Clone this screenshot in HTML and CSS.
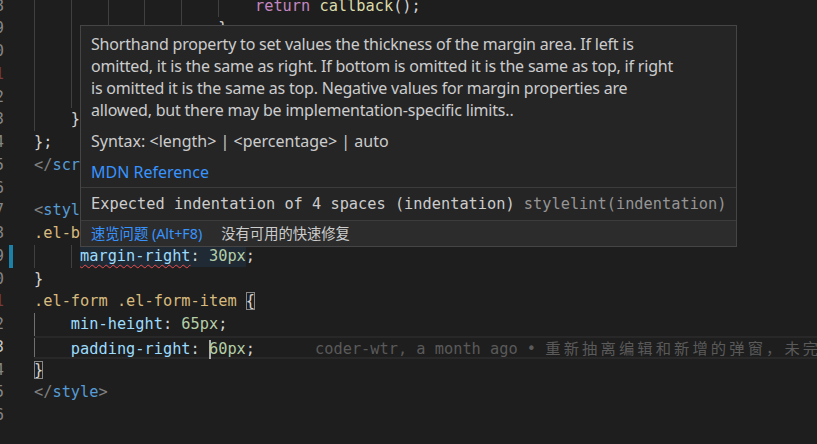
FILE: index.html
```html
<!DOCTYPE html>
<html>
  <head>
    <meta charset="UTF-8">
    <title>editor hover</title>
    <link rel="stylesheet" href="styles.css">
  </head>
  <body>
    <div class="editor">
      <div class="gutter">
        <div class="ln">98</div>
        <div class="ln">99</div>
        <div class="ln">100</div>
        <div class="ln red">101</div>
        <div class="ln">102</div>
        <div class="ln">103</div>
        <div class="ln">104</div>
        <div class="ln">105</div>
        <div class="ln">106</div>
        <div class="ln">107</div>
        <div class="ln">108</div>
        <div class="ln mod">109</div>
        <div class="ln">110</div>
        <div class="ln red">111</div>
        <div class="ln">112</div>
        <div class="ln active">113</div>
        <div class="ln">114</div>
        <div class="ln">115</div>
        <div class="ln">116</div>
      </div>

      <div class="code">
        <div class="l"><span class="g"></span><span class="g"></span><span class="g"></span><span class="g"></span><span class="g"></span><span class="g"></span><span class="kw">return</span> <span class="fn">callback</span>();</div>
        <div class="l"><span class="g"></span><span class="g"></span><span class="g"></span><span class="g"></span><span class="g"></span>}</div>
        <div class="l"><span class="g"></span><span class="g"></span><span class="g"></span><span class="g"></span>}</div>
        <div class="l"><span class="g"></span><span class="g"></span><span class="g"></span>});</div>
        <div class="l"><span class="g"></span><span class="g"></span>}</div>
        <div class="l"><span class="g"></span>}</div>
        <div class="l">};</div>
        <div class="l"><span class="tg">&lt;/</span><span class="tag">script</span><span class="tg">&gt;</span></div>
        <div class="l"></div>
        <div class="l"><span class="tg">&lt;</span><span class="tag">style</span> <span class="at">scoped</span><span class="tg">&gt;</span></div>
        <div class="l"><span class="sel">.el-button</span> {</div>
        <div class="l"><span class="g"></span><span class="g w1"></span><span class="hl"><span class="prop err">margin-right</span>: <span class="num">30px</span></span>;</div>
        <div class="l">}</div>
        <div class="l"><span class="sel">.el-form .el-form-item</span> <span class="match">{</span></div>
        <div class="l"><span class="g on"></span><span class="prop">min-height</span>: <span class="num">65px</span>;</div>
        <div class="l cur"><span class="g on"></span><span class="prop">padding-right</span>: <span class="caret"></span><span class="num">60px</span>;<span class="blame">coder-wtr, a month ago • <span class="cjk">重新抽离编辑和新增的弹窗，未完成</span></span></div>
        <div class="l"><span class="match">}</span></div>
        <div class="l"><span class="tg">&lt;/</span><span class="tag">style</span><span class="tg">&gt;</span></div>
        <div class="l"></div>
      </div>
    </div>

    <div class="hover">
      <div class="doc">
        <p class="desc">Shorthand property to set values the thickness of the margin area. If left is<br>omitted, it is the same as right. If bottom is omitted it is the same as top, if right<br>is omitted it is the same as top. Negative values for margin properties are<br>allowed, but there may be implementation-specific limits..</p>
        <p class="syntax">Syntax: &lt;length&gt; | &lt;percentage&gt; | auto</p>
        <p class="mdn">MDN Reference</p>
      </div>
      <div class="msg">Expected indentation of 4 spaces (indentation) <span class="src">stylelint(indentation)</span></div>
      <div class="status">
        <span class="peek">速览问题 (Alt+F8)</span>
        <span>没有可用的快速修复</span>
      </div>
    </div>
  </body>
</html>
```

FILE: styles.css
```css
*
{
  box-sizing: border-box;
}

body
{
  margin: 0;
  width: 817px;
  height: 444px;
  overflow: hidden;
  background: #1e1e1e;
}

.editor
{
  display: flex;
  margin-top: -5.4px;
  font-family: "DejaVu Sans Mono", monospace;
  font-size: 15.3px;
  color: #d4d4d4;
}

/* line numbers: only the last digit peeks in at the left edge */
.gutter
{
  flex: none;
  width: 64px;
  margin-left: -30px;
}

.ln
{
  position: relative;
  width: 34px;
  height: 22.75px;
  line-height: 22.75px;
  text-align: right;
  color: #858585;
}

.ln.red
{
  color: #7a3b3b;
}

.ln.active
{
  color: #c6c6c6;
}

.ln.mod::after
{
  content: "";
  position: absolute;
  left: 39px;
  top: 0;
  width: 4px;
  height: 100%;
  background: #1b81a8;
}

.code
{
  flex: 1;
  min-width: 0;
}

.l
{
  height: 22.75px;
  line-height: 22.75px;
  white-space: pre;
}

.l.cur
{
  border-top: 2px solid #282828;
  border-bottom: 2px solid #282828;
  line-height: 18.75px;
}

.g
{
  display: inline-block;
  width: 4ch;
  height: 22.75px;
  vertical-align: top;
  box-shadow: inset 1px 0 0 #404040;
}

.g.w1
{
  width: 1ch;
}

.cur .g
{
  height: 18.75px;
}

.g.on
{
  box-shadow: inset 1px 0 0 #707070;
}

.kw { color: #c586c0; }
.fn { color: #dcdcaa; }
.tg { color: #808080; }
.tag { color: #569cd6; }
.at { color: #9cdcfe; }
.sel { color: #d7ba7d; }
.prop { color: #9cdcfe; }
.num { color: #b5cea8; }

.hl
{
  background: #202a34;
  padding: 2px 0;
}

.err
{
  text-decoration: underline wavy #f14c4c;
  text-decoration-thickness: 1px;
  text-underline-offset: 3px;
}

.match
{
  outline: 1px solid #888888;
  outline-offset: -1px;
}

.caret
{
  display: inline-block;
  width: 2px;
  height: 19px;
  margin-right: -2px;
  vertical-align: middle;
  background: #aeafad;
}

.blame
{
  margin-left: 60px;
  color: #5a5a5a;
}

.blame .cjk
{
  font-family: "Noto Sans CJK SC", monospace;
  letter-spacing: 3.1px;
}

/* hover widget */
.hover
{
  position: absolute;
  left: 80px;
  top: 25px;
  width: 657px;
  height: 222px;
  border: 1px solid #454545;
  background: #252526;
  color: #cccccc;
  font-family: "Noto Sans", "Noto Sans CJK SC", sans-serif;
  font-size: 14.3px;
}

.doc
{
  height: 161px;
  padding: 7px 9px 0 10px;
  font-size: 16px;
}

.doc p
{
  margin: 0;
  line-height: 22px;
}

.doc .desc
{
  white-space: nowrap;
  letter-spacing: -0.2px;
}

.doc .syntax,
.doc .mdn
{
  margin-top: 9px;
}

.mdn,
.peek
{
  color: #3794ff;
}

.msg
{
  height: 33px;
  padding-left: 10px;
  border-top: 1px solid #3c3c3c;
  line-height: 32px;
  font-family: "DejaVu Sans Mono", monospace;
  font-size: 15.3px;
  white-space: pre;
}

.msg .src
{
  color: #959595;
}

.status
{
  display: flex;
  gap: 19px;
  height: 26px;
  padding: 1px 0 0 10px;
  border-top: 1px solid #3c3c3c;
  background: #2c2c2d;
  line-height: 24px;
  font-size: 14.3px;
}
```
